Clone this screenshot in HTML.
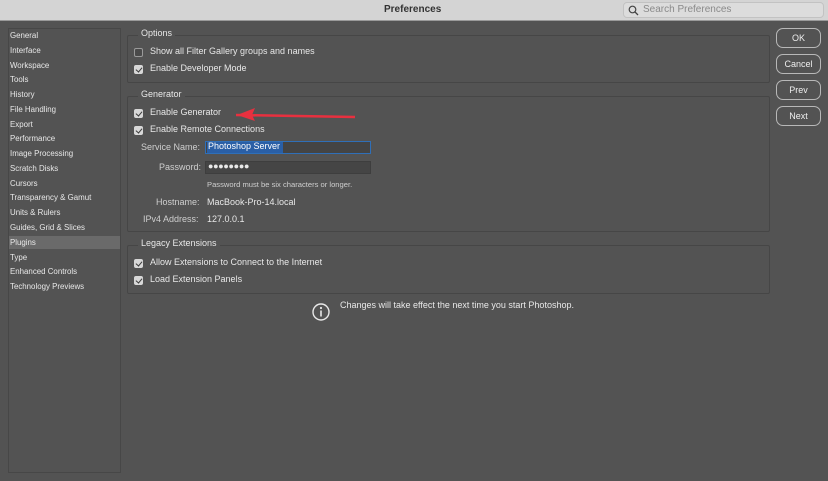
<!DOCTYPE html>
<html><head><meta charset="utf-8"><style>
*{margin:0;padding:0;box-sizing:border-box}
body{width:828px;height:481px;overflow:hidden;background:#535353;font-family:"Liberation Sans",sans-serif;color:#e6e6e6;position:relative}
.a{position:absolute;white-space:nowrap}
#title{left:0;top:0;width:828px;height:21px;background:#d4d4d4;border-bottom:1px solid #9a9a9a}
#side{left:8px;top:28px;width:113px;height:445px;border:1px solid #474747;background:#535353}
.si{position:absolute;left:10px;font-size:7.9px;color:#e8e8e8}
.box{position:absolute;border:1px solid #464646;border-radius:2px}
.lbl{position:absolute;font-size:9px;background:#535353;padding:0 3px;color:#e8e8e8}
.cb{position:absolute;width:9px;height:9px;background:#d8d8d8;border-radius:2px}
.cb.on::after{content:"";position:absolute;left:2.5px;top:0.5px;width:3px;height:5px;border:solid #3a3a3a;border-width:0 1.5px 1.5px 0;transform:rotate(40deg)}
.cb.off{background:#4a4a4a;border:1px solid #9a9a9a}
.t{position:absolute;font-size:9px;color:#e8e8e8;white-space:nowrap}
.g{color:#cfcfcf}
.btn{position:absolute;left:776px;width:45px;height:20px;border:1px solid #b8b8b8;border-radius:7px;font-size:9px;text-align:center;line-height:18px;color:#eee}
</style></head><body>
<div class="a" id="title"></div>
<div class="a" style="left:384px;top:4px;font-size:10px;font-weight:bold;color:#333">Preferences</div>
<div class="a" style="left:623px;top:2px;width:201px;height:16px;border:1px solid #c2c2c2;border-radius:4px;background:#dcdcdc"></div>
<svg class="a" style="left:628px;top:5px" width="11" height="11"><circle cx="4.5" cy="4.5" r="3.3" fill="none" stroke="#444" stroke-width="1.2"/><line x1="7" y1="7" x2="10" y2="10" stroke="#444" stroke-width="1.3"/></svg>
<div class="a" style="left:643px;top:4px;font-size:10px;color:#8a8a8a">Search Preferences</div>

<div class="a" id="side"></div>
<div class="a" style="left:9px;top:236px;width:111px;height:13px;background:#6a6a6a"></div>
<div class="si" style="top:31px">General</div>
<div class="si" style="top:46px">Interface</div>
<div class="si" style="top:61px">Workspace</div>
<div class="si" style="top:75px">Tools</div>
<div class="si" style="top:90px">History</div>
<div class="si" style="top:105px">File Handling</div>
<div class="si" style="top:120px">Export</div>
<div class="si" style="top:134px">Performance</div>
<div class="si" style="top:149px">Image Processing</div>
<div class="si" style="top:164px">Scratch Disks</div>
<div class="si" style="top:179px">Cursors</div>
<div class="si" style="top:193px">Transparency &amp; Gamut</div>
<div class="si" style="top:208px">Units &amp; Rulers</div>
<div class="si" style="top:223px">Guides, Grid &amp; Slices</div>
<div class="si" style="top:238px">Plugins</div>
<div class="si" style="top:253px">Type</div>
<div class="si" style="top:267px">Enhanced Controls</div>
<div class="si" style="top:282px">Technology Previews</div>

<div class="box" style="left:127px;top:35px;width:643px;height:48px"></div>
<div class="lbl" style="left:138px;top:28px">Options</div>
<div class="cb off" style="left:134px;top:48px"></div><div class="t" style="left:150px;top:46px">Show all Filter Gallery groups and names</div>
<div class="cb on" style="left:134px;top:65px"></div><div class="t" style="left:150px;top:63px">Enable Developer Mode</div>

<div class="box" style="left:127px;top:96px;width:643px;height:136px"></div>
<div class="lbl" style="left:138px;top:89px">Generator</div>
<div class="cb on" style="left:134px;top:109px"></div><div class="t" style="left:150px;top:107px">Enable Generator</div>
<svg class="a" style="left:230px;top:106px" width="130" height="16"><path d="M6 9 L125 11" stroke="#e8303f" stroke-width="2.5"/><path d="M7 9 L25 2 L22 9 L25 15 Z" fill="#e8303f"/></svg>
<div class="cb on" style="left:134px;top:126px"></div><div class="t" style="left:150px;top:124px">Enable Remote Connections</div>
<div class="t g" style="left:141px;top:142px">Service Name:</div>
<div class="a" style="left:205px;top:141px;width:166px;height:13px;background:#444;border:1px solid #2f6fb8"></div>
<div class="a" style="left:207px;top:142px;width:76px;height:11px;background:#2a5fa6"></div>
<div class="t" style="left:208px;top:141px;color:#fff">Photoshop Server</div>
<div class="t g" style="left:159px;top:162px">Password:</div>
<div class="a" style="left:205px;top:161px;width:166px;height:13px;background:#454545;border:1px solid #3e3e3e"></div>
<div class="t" style="left:208px;top:161px;font-size:9px;letter-spacing:-0.3px">●●●●●●●●</div>
<div class="t g" style="left:207px;top:180px;font-size:7.6px">Password must be six characters or longer.</div>
<div class="t g" style="left:156px;top:197px">Hostname:</div><div class="t" style="left:207px;top:197px">MacBook-Pro-14.local</div>
<div class="t g" style="left:143px;top:214px">IPv4 Address:</div><div class="t" style="left:207px;top:214px">127.0.0.1</div>

<div class="box" style="left:127px;top:245px;width:643px;height:49px"></div>
<div class="lbl" style="left:138px;top:238px">Legacy Extensions</div>
<div class="cb on" style="left:134px;top:259px"></div><div class="t" style="left:150px;top:257px">Allow Extensions to Connect to the Internet</div>
<div class="cb on" style="left:134px;top:276px"></div><div class="t" style="left:150px;top:274px">Load Extension Panels</div>

<svg class="a" style="left:311px;top:302px" width="20" height="20"><circle cx="10" cy="10" r="8" fill="none" stroke="#e8e8e8" stroke-width="1.4"/><circle cx="10" cy="6" r="1.1" fill="#e8e8e8"/><rect x="9.2" y="8.5" width="1.6" height="6" fill="#e8e8e8"/></svg>
<div class="t" style="left:340px;top:300px">Changes will take effect the next time you start Photoshop.</div>

<div class="btn" style="top:28px">OK</div>
<div class="btn" style="top:54px">Cancel</div>
<div class="btn" style="top:80px">Prev</div>
<div class="btn" style="top:106px">Next</div>
</body></html>
